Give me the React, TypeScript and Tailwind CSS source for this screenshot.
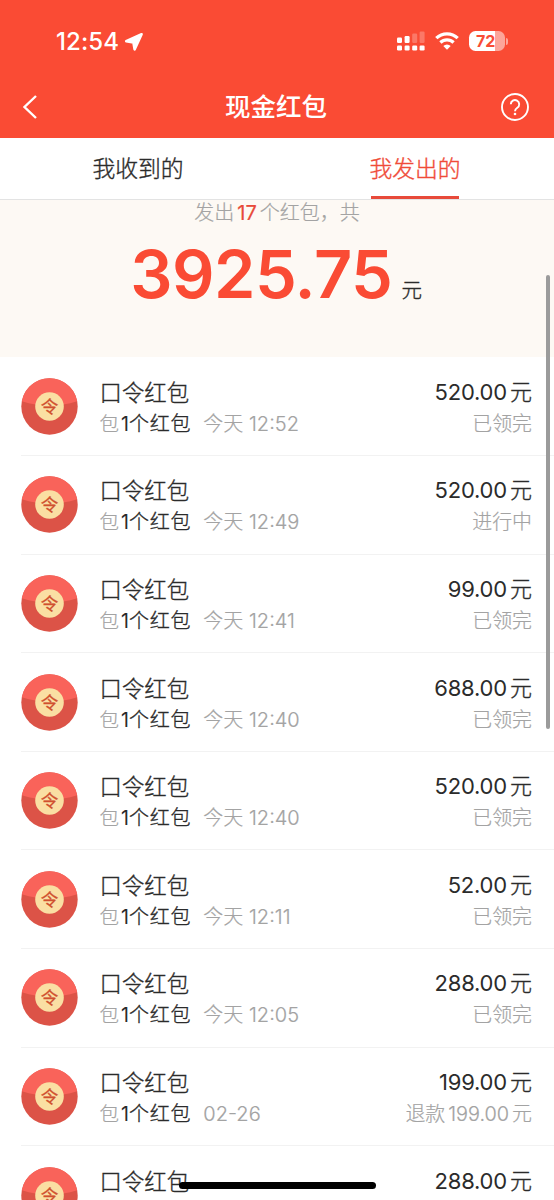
import { useState } from "react";

const records = [
  { amount: "520.00", time: "今天 12:52", status: "已领完" },
  { amount: "520.00", time: "今天 12:49", status: "进行中" },
  { amount: "99.00", time: "今天 12:41", status: "已领完" },
  { amount: "688.00", time: "今天 12:40", status: "已领完" },
  { amount: "520.00", time: "今天 12:40", status: "已领完" },
  { amount: "52.00", time: "今天 12:11", status: "已领完" },
  { amount: "288.00", time: "今天 12:05", status: "已领完" },
  { amount: "199.00", time: "02-26", status: "退款", refund: "199.00" },
  { amount: "288.00" },
];

function StatusBar() {
  return (
    <div className="flex h-[76px] items-start justify-between pl-[56px] pr-[46px] pt-[28px]">
      <div className="flex items-center gap-[5px]">
        <span className="text-[24px] font-medium leading-[28px] tracking-[0.1px]">
          12:54
        </span>
        <svg width="20" height="20" viewBox="0 0 20 20" fill="currentColor">
          <path
            d="M17.600 2.200 2.200 9.200 9.400 10.400 10.600 17.400z"
            stroke="currentColor"
            strokeWidth="2.600"
            strokeLinejoin="round"
          />
        </svg>
      </div>
      <div className="mt-[3px] flex items-start">
        <svg width="28" height="20" viewBox="0 0 28 20" fill="currentColor">
          <rect x="0" y="6.500" width="5" height="5.500" rx="1.200" />
          <rect x="7.600" y="5" width="5" height="7" rx="1.200" />
          <rect x="15.200" y="2.500" width="5" height="9.500" rx="1.200" opacity=".25" />
          <rect x="22.600" y="0.500" width="5" height="11.500" rx="1.200" opacity=".25" />
          <rect x="0" y="14.500" width="5" height="5" rx="1.200" />
          <rect x="7.600" y="14.500" width="5" height="5" rx="1.200" />
          <rect x="15.200" y="14.500" width="5" height="5" rx="1.200" />
          <rect x="22.600" y="14.500" width="5" height="5" rx="1.200" />
        </svg>
        <svg
          className="ml-[10px]"
          width="24"
          height="20"
          viewBox="0 0 24 20"
          fill="none"
          stroke="currentColor"
          strokeWidth="3.200"
        >
          <path d="M1.300 7.200a15.200 15.200 0 0 1 21.400 0" />
          <path d="M5.400 11.500a9.400 9.400 0 0 1 13.200 0" />
          <path
            d="M12 18.800 8.300 15.100a5.300 5.300 0 0 1 7.400 0z"
            fill="currentColor"
            stroke="none"
          />
        </svg>
        <div className="ml-[10px] flex items-center gap-px">
          <div className="flex h-5 w-9 items-center rounded-[6.500px] bg-linear-to-r from-white from-72% to-white/50 to-72% pl-[7px] text-[16px] font-bold leading-5 text-[#f94c35]">
            72
          </div>
          <div className="h-[7px] w-[2px] rounded-r-full bg-white/50" />
        </div>
      </div>
    </div>
  );
}

function PacketIcon() {
  return (
    <svg className="shrink-0" width="57" height="57" viewBox="0 0 57 57">
      <circle cx="28.500" cy="28.500" r="28.200" fill="#dc5347" />
      <path
        d="M.8 23.200A28.200 28.200 0 0 1 56.200 23.200Q28.500 32 .8 23.200z"
        fill="#f9635a"
      />
      <circle cx="28.500" cy="28.500" r="14.300" fill="#fadfa3" />
      <text
        x="28.500"
        y="35"
        textAnchor="middle"
        fontSize="17.500"
        fill="#d0502f"
        stroke="#d0502f"
        strokeWidth="0.300"
      >
        令
      </text>
    </svg>
  );
}

function RecordRow({ record }) {
  return (
    <li className="ml-[21px] flex h-[98.600px] items-start border-b border-[#f2f2f2] pr-[22px] pt-[20.500px]">
      <PacketIcon />
      <div className="ml-[21.500px] flex flex-1 flex-col">
        <span className="text-[22.400px] font-light leading-[30px] [-webkit-text-stroke:0.35px]">
          口令红包
        </span>
        {record.time && (
          <div className="mt-px flex text-[19.500px] leading-[30px] text-[#a3a3a3]">
            <span className="font-light [-webkit-text-stroke:0.2px]">包</span>
            <span className="ml-[2px] text-[#2b2b2b]">
              1
              <span className="text-[20px] font-light tracking-[0.8px] [-webkit-text-stroke:0.35px]">
                个红包
              </span>
            </span>
            <span className="ml-[12px] whitespace-pre text-[20px] font-light [-webkit-text-stroke:0.2px]">
              {record.time}
            </span>
          </div>
        )}
      </div>
      <div className="flex flex-col items-end">
        <span className="-mt-px mb-px text-[22px] leading-[30px]">
          <span className="mr-[3px] tracking-[-0.2px]">{record.amount}</span>
          <span className="font-light [-webkit-text-stroke:0.35px]">元</span>
        </span>
        {record.status && (
          <span className="mt-px text-[19.900px] font-light leading-[30px] text-[#a3a3a3] [-webkit-text-stroke:0.2px]">
            {record.status}
            {record.refund && (
              <>
                <span className="ml-[3px] mr-[3px]">{record.refund}</span>元
              </>
            )}
          </span>
        )}
      </div>
    </li>
  );
}

export default function App() {
  const [tab, setTab] = useState("sent");
  const tabs = [
    { id: "received", label: "我收到的" },
    { id: "sent", label: "我发出的" },
  ];

  return (
    <div className="relative flex h-[1200px] w-[554px] flex-col overflow-hidden bg-white font-['Inter','Noto_Sans_CJK_SC',sans-serif] text-[#2b2b2b]">
      <header className="h-[138px] shrink-0 bg-[#fa4b34] text-white">
        <StatusBar />
        <div className="flex h-[62px] items-center justify-between pl-[23px] pr-[25px]">
          <svg
            width="28"
            height="24"
            viewBox="0 0 28 24"
            fill="none"
            stroke="currentColor"
            strokeWidth="2.400"
          >
            <path d="M13 1 1.500 12 13 23" />
          </svg>
          <h1 className="text-[25.500px] font-medium leading-[38px]">现金红包</h1>
          <svg
            width="28"
            height="28"
            viewBox="0 0 28 28"
            fill="none"
            stroke="currentColor"
            strokeWidth="1.900"
          >
            <circle cx="14" cy="14" r="13" />
            <path d="M9.800 11.300a4.200 4.200 0 1 1 6.500 3.500c-1.500 1-2.300 1.700-2.300 3.500" />
            <circle cx="14" cy="21" r="1.300" fill="currentColor" stroke="none" />
          </svg>
        </div>
      </header>

      <nav className="flex h-[61.500px] shrink-0 border-b border-[#e3e3e3]">
        {tabs.map((item) => (
          <button
            key={item.id}
            onClick={() => setTab(item.id)}
            className={`flex flex-1 flex-col items-center pr-px text-[22.800px] font-light [-webkit-text-stroke:0.35px] ${
              tab === item.id ? "text-[#f04b38]" : ""
            }`}
          >
            <span className="flex-1 pt-[14px] leading-[34px]">{item.label}</span>
            {tab === item.id && <span className="h-[3px] w-[88px] bg-[#e84a3a]" />}
          </button>
        ))}
      </nav>

      <section className="h-[157.500px] shrink-0 bg-[#fdf9f4] text-center">
        <p className="text-[20px] font-light leading-[26px] text-[#a3a3a3] [-webkit-text-stroke:0.2px]">
          发出
          <span className="mx-[3px] font-normal text-[#e84a3a]">17</span>
          个红包，共
        </p>
        <p className="flex items-baseline justify-center pr-[2px]">
          <span className="text-[66.500px] font-semibold leading-[96px] tracking-[-0.5px] text-[#fa4b34]">
            3925.75
          </span>
          <span className="ml-[9px] text-[20.500px] font-light [-webkit-text-stroke:0.35px]">
            元
          </span>
        </p>
      </section>

      <ul className="pt-[0.4px]">
        {records.map((record, index) => (
          <RecordRow key={index} record={record} />
        ))}
      </ul>

      {/* scroll thumb and home indicator */}
      <div className="absolute right-[4px] top-[275px] h-[454px] w-[4px] rounded-full bg-[#9b9b9b]" />
      <div className="absolute left-[179px] top-[1182px] h-[7px] w-[197px] rounded-full bg-black" />
    </div>
  );
}
